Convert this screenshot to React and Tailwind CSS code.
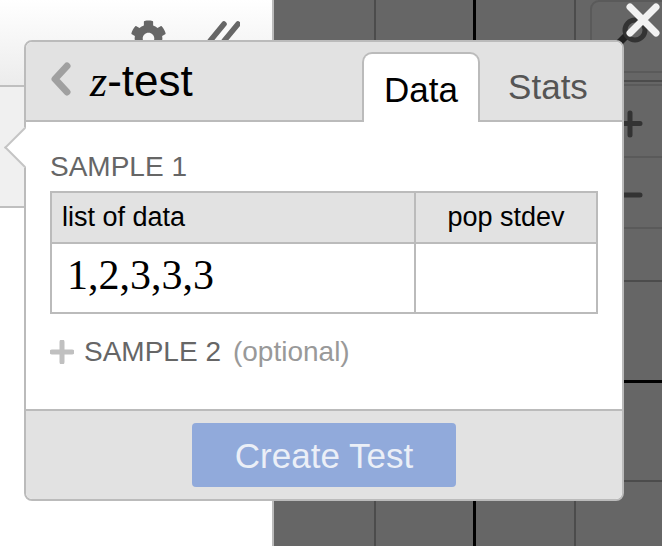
import React from "react";
import { FaCog } from "react-icons/fa";

const sans = "font-['Liberation_Sans',Arial,sans-serif]";

function Backdrop() {
  return (
    <div className="flex h-[546px] w-[662px]">
      <div className="flex w-[274px] flex-col border-r-2 border-[#bbbbbb] bg-white">
        <div className="flex h-[85px] items-start gap-[40px] bg-gradient-to-b from-white to-[#ececec] pl-[130px] pt-[20px]">
          <FaCog size={37} color="#666666" />
          <svg width="34" height="24" viewBox="0 0 34 24" className="-ml-[1px]">
            <path d="M4 21 L18 4 M18 21 L32 4" stroke="#666666" strokeWidth="5.500" strokeLinecap="round" fill="none" />
          </svg>
        </div>
        <div className="h-[123px] border-y-2 border-[#bfbfbf] bg-[#f0f0f0]" />
      </div>
      <div className="relative flex-1 overflow-hidden bg-[#666666]">
        <svg width="388" height="546" viewBox="274 0 388 546" className="block">
          <path d="M375 0V546M575 0V546M274 81H662M274 281H662M274 481H662" stroke="#4c4c4c" strokeWidth="2" fill="none" />
          <path d="M474.500 0V546M274 381.500H662" stroke="#000000" strokeWidth="3" fill="none" />
          <rect x="591" y="1" width="90" height="71" rx="8" fill="#666666" stroke="#5a5a5a" strokeWidth="2" />
          <rect x="591" y="85" width="90" height="143" rx="8" fill="#666666" stroke="#5a5a5a" strokeWidth="2" />
          <path d="M591 157H662" stroke="#5a5a5a" strokeWidth="2" />
          <path d="M618 44L630 32" stroke="#222222" strokeWidth="7" />
          <circle cx="635" cy="30" r="10" fill="none" stroke="#333333" strokeWidth="5" />
          <path d="M630 113V135M620 123.500H640M620 195H640" stroke="#333333" strokeWidth="5" strokeLinecap="round" fill="none" />
        </svg>
      </div>
    </div>
  );
}

function Popover() {
  return (
    <div className={`absolute left-[24px] top-[40px] flex h-[461px] w-[600px] flex-col rounded-[8px] border-2 border-[#bbbbbb] bg-white ${sans}`}>
      <header className="flex h-[80px] items-end justify-between rounded-t-[6px] border-b-2 border-[#bbbbbb] bg-[#e2e2e2]">
        <div className="flex h-full items-center self-start pl-[24px]">
          <svg width="22" height="34" viewBox="0 0 22 34" className="-mt-[4px]">
            <path d="M17 4 L5 17 L17 30" stroke="#a0a0a0" strokeWidth="7" strokeLinecap="round" strokeLinejoin="round" fill="none" />
          </svg>
          <h1 className="ml-[18px] pt-[1px] text-[44px] leading-none text-black">
            <span className="font-['Liberation_Serif',serif] italic">z</span>-test
          </h1>
        </div>
        <div className="flex items-end">
          <div className="-mb-[2px] flex h-[70px] w-[118px] items-center justify-center rounded-t-[10px] border-2 border-b-0 border-[#bbbbbb] bg-white pt-[3px] text-[35px] leading-none text-black">
            Data
          </div>
          <div className="flex h-[68px] w-[142px] items-center justify-center pr-[6px] pt-[1px] text-[35px] leading-none text-[#555555]">
            Stats
          </div>
        </div>
      </header>

      <main className="flex flex-1 flex-col px-[24px] pt-[30px]">
        <div className="text-[28px] leading-[30px] text-[#666666]">SAMPLE 1</div>
        <div className="mt-[9px] grid h-[123px] w-[548px] grid-cols-[364px_1fr] grid-rows-[51px_1fr] border-2 border-[#bbbbbb] text-[27px]">
          <div className="flex items-center border-b-2 border-r-2 border-[#bbbbbb] bg-[#e2e2e2] pl-[10px] text-black">list of data</div>
          <div className="flex items-center justify-center border-b-2 border-[#bbbbbb] bg-[#e2e2e2] text-black">pop stdev</div>
          <div className="flex items-center border-r-2 border-[#bbbbbb] pb-[6px] pl-[15px] font-['Liberation_Serif',serif] text-[42px] text-black">1,2,3,3,3</div>
          <div />
        </div>
        <div className="mt-[22px] flex items-center">
          <svg width="24" height="24" viewBox="0 0 24 24">
            <path d="M12 2V22M2 12H22" stroke="#c0c0c0" strokeWidth="5" strokeLinecap="round" fill="none" />
          </svg>
          <span className="ml-[10px] text-[28px] leading-[32px] text-[#666666]">SAMPLE 2</span>
          <span className="ml-[12px] text-[28px] leading-[32px] text-[#999999]">(optional)</span>
        </div>
      </main>

      <footer className="flex h-[90px] justify-center rounded-b-[6px] border-t-2 border-[#bbbbbb] bg-[#e2e2e2] pt-[12px]">
        <button className="flex h-[64px] w-[264px] items-center justify-center rounded-[4px] bg-[#91aadb] text-[35px] leading-none text-[#ebeff7]">
          Create Test
        </button>
      </footer>
    </div>
  );
}

export default function App() {
  return (
    <div className="relative h-[546px] w-[662px] overflow-hidden bg-white">
      <Backdrop />
      <Popover />
      <div className="absolute left-[10px] top-[133px] h-[29px] w-[29px] rotate-45 border-b-2 border-l-2 border-[#c4c4c4] bg-white" />
      <svg width="40" height="40" viewBox="0 0 40 40" className="absolute left-[622px] top-0">
        <path d="M8 7L34 33M34 7L8 33" stroke="#f2f2f2" strokeWidth="7" strokeLinecap="round" fill="none" />
      </svg>
    </div>
  );
}
